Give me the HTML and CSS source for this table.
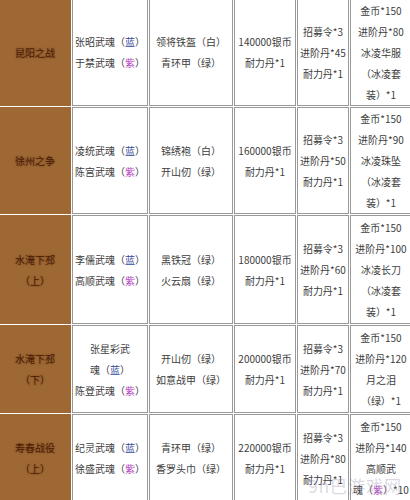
FILE: index.html
```html
<!DOCTYPE html>
<html lang="zh">
<head>
<meta charset="utf-8">
<title>关卡奖励</title>
<link rel="stylesheet" href="styles.css">
</head>
<body>
<table class="rewards">
  <colgroup>
    <col class="c1"><col class="c2"><col class="c3"><col class="c4"><col class="c5"><col class="c6">
  </colgroup>
  <tr class="r1">
    <td class="stage">昆阳之战</td>
    <td>张昭武魂（<span class="blue">蓝</span>）<br>于禁武魂（<span class="purple">紫</span>）</td>
    <td>领将铁盔（白）<br>青环甲（绿）</td>
    <td>140000银币<br>耐力丹*1</td>
    <td>招募令*3<br>进阶丹*45<br>耐力丹*1</td>
    <td>金币*150<br>进阶丹*80<br>冰凌华服<br>（冰凌套<br>装）*1</td>
  </tr>
  <tr class="r2">
    <td class="stage">徐州之争</td>
    <td>凌统武魂（<span class="blue">蓝</span>）<br>陈宫武魂（<span class="purple">紫</span>）</td>
    <td>锦绣袍（白）<br>开山仞（绿）</td>
    <td>160000银币<br>耐力丹*1</td>
    <td>招募令*3<br>进阶丹*50<br>耐力丹*1</td>
    <td>金币*150<br>进阶丹*90<br>冰凌珠坠<br>（冰凌套<br>装）*1</td>
  </tr>
  <tr class="r3">
    <td class="stage">水淹下邳<br>（上）</td>
    <td>李儒武魂（<span class="blue">蓝</span>）<br>高顺武魂（<span class="purple">紫</span>）</td>
    <td>黑铁冠（绿）<br>火云扇（绿）</td>
    <td>180000银币<br>耐力丹*1</td>
    <td>招募令*3<br>进阶丹*60<br>耐力丹*1</td>
    <td>金币*150<br>进阶丹*100<br>冰凌长刀<br>（冰凌套<br>装）*1</td>
  </tr>
  <tr class="r4">
    <td class="stage">水淹下邳<br>（下）</td>
    <td>张星彩武<br>魂（<span class="blue">蓝</span>）<br>陈登武魂（<span class="purple">紫</span>）</td>
    <td>开山仞（绿）<br>如意战甲（绿）</td>
    <td>200000银币<br>耐力丹*1</td>
    <td>招募令*3<br>进阶丹*70<br>耐力丹*1</td>
    <td>金币*150<br>进阶丹*120<br>月之泪<br>（绿）*1</td>
  </tr>
  <tr class="r5">
    <td class="stage">寿春战役<br>（上）</td>
    <td>纪灵武魂（<span class="blue">蓝</span>）<br>徐盛武魂（<span class="purple">紫</span>）</td>
    <td>青环甲（绿）<br>香罗头巾（绿）</td>
    <td>220000银币<br>耐力丹*1</td>
    <td>招募令*3<br>进阶丹*80<br>耐力丹*1</td>
    <td>金币*150<br>进阶丹*140<br>高顺武<br>魂（<span class="purple">紫</span>）*10</td>
  </tr>
</table>
<div class="watermark">9h巴游戏网</div>
</body>
</html>
```

FILE: styles.css
```css
html, body {
  margin: 0;
  padding: 0;
  background: #ffffff;
}

body {
  width: 410px;
  height: 500px;
  overflow: hidden;
  position: relative;
  font-family: "Noto Sans CJK SC", "Noto Sans", sans-serif;
}

.rewards {
  border-collapse: separate;
  border-spacing: 1px;
  table-layout: fixed;
  width: 415px;
  margin: -3px 0 0 -2px;
  font-size: 10px;
  line-height: 21px;
  color: #3d3d3d;
  text-align: center;
}

.c1 { width: 72px; }
.c2 { width: 76px; }
.c3 { width: 84px; }
.c4 { width: 62px; }
.c5 { width: 52px; }
.c6 { width: 62px; }

.rewards td {
  border: 1px solid #999999;
  padding: 0;
  vertical-align: middle;
  background: #ffffff;
  white-space: nowrap;
}

.rewards td.stage {
  background: #9d6834;
  border-color: #9d6834;
  color: #4a1d05;
  text-shadow: 0 0 2px rgba(90, 30, 8, 0.6);
}

.r1 { height: 108px; }
.r2 { height: 107px; }
.r3 { height: 109px; }
.r4 { height: 88px; }
.r5 { height: 88px; }

.blue { color: #34489c; }
.purple { color: #b84cc4; }

.watermark {
  position: absolute;
  right: 8px;
  bottom: 2px;
  font-size: 17px;
  color: rgba(150, 140, 170, 0.35);
  letter-spacing: 1px;
}
```
